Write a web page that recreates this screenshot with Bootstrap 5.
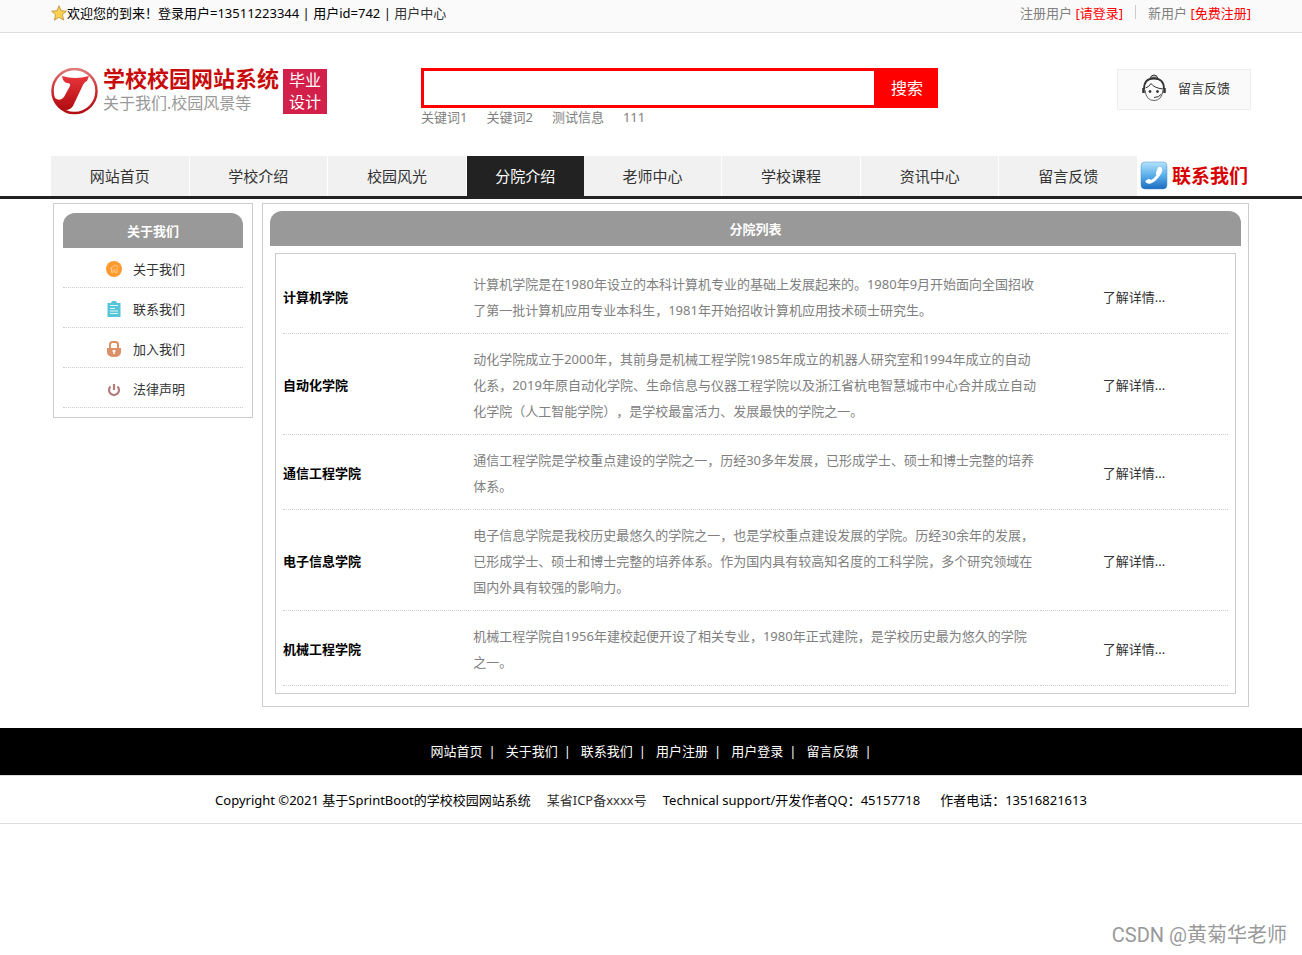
<!DOCTYPE html>
<html lang="zh-CN">
<head>
<meta charset="utf-8">
<meta name="viewport" content="width=device-width, initial-scale=1">
<title>学校校园网站系统</title>
<link href="https://cdn.jsdelivr.net/npm/bootstrap@5.3.0/dist/css/bootstrap.min.css" rel="stylesheet">
<style>
body{font:13px/26px "Noto Sans","Noto Sans CJK SC",sans-serif;color:#000;background:#fff;text-spacing-trim:space-all}
a{color:#333;text-decoration:none}
a:hover{color:#f00}
.wrap{width:100%;max-width:1200px;margin:0 auto}
.topbar{background:#fafafa;border-bottom:1px solid #ddd;height:33px;line-height:27px}
.topbar a.hot{color:#f00}
.topbar .star{margin-top:5px}
.account{gap:12px}
.muted{color:#808080}
.split{width:1px;height:14px;margin-top:5px;background:#ccc}
.masthead{height:123px;padding-top:35px}
.brand{width:370px}
.brand-text{margin-top:-4px}
.brand-name{font-size:22px;line-height:28px;font-weight:700;color:#c80b0b}
.brand-sub{font-size:16px;line-height:22px;color:#999}
.stamp{width:44px;height:45px;margin-top:1px;background:#d2204a;color:#fff;font-size:16px;line-height:22px}
.search{width:517px}
.search input{height:40px;border:3px solid #f00;border-right:0;outline:0}
.search button{width:64px;height:40px;padding-left:8px;border:0;background:#f00;color:#fff;font-size:16px}
.keys{gap:19px;line-height:18px}
.keys a{color:#808080}
.feedback{width:134px;height:41px;margin-top:1px;padding:0 0 4px 4px;gap:12px;background:#fafafa;border:1px solid #eee}
.mainnav{border-bottom:3px solid #222}
.mainnav .tabs a{flex:1 1 0;height:40px;line-height:40px;font-size:15px;text-align:center;background:#f1f1f1;border-right:1px solid #fff}
.mainnav .tabs a.current{flex:0 0 117px;background:#222;color:#fff;border:0}
.tel{width:113px;padding-left:2px;gap:4px;color:#d80000;font-size:19px;font-weight:700;white-space:nowrap}
.panes{padding:4px 2px 0;gap:9px}
.pane{border:1px solid #ccc}
.side{width:200px;padding:9px}
.pane-head{height:35px;line-height:36px;font-size:13px;font-weight:700;margin:0;text-align:center;color:#fff;background:#999;border-radius:12px 12px 0 0}
.side li{height:40px;border-bottom:1px dotted #ccc}
.side li a{height:39px;padding:2px 0 0 43px;gap:11px}
.content{padding:7px 7px 12px}
.colleges{border:1px solid #ccc;margin:7px 5px 0;padding:5px}
.colleges table{width:100%;border-collapse:separate;border-spacing:2px;table-layout:fixed}
.colleges th,.colleges td{padding:10px 0;border-bottom:1px dotted #ccc;vertical-align:middle}
.footlinks{margin-top:21px;background:#000;height:47px;line-height:47px;color:#fff;gap:10px}
.footlinks a{color:#fff}
.footlinks a::after{content:"|";margin-left:6px}
.legal{border:solid #ddd;border-width:1px 0;height:49px;line-height:49px;gap:16px}
.sign{font:20px/30px Roboto,"Noto Sans CJK SC",sans-serif;color:#999;padding:0 15px 5px}
</style>
</head>
<body class="d-flex flex-column min-vh-100">
<div class="topbar">
  <div class="wrap d-flex justify-content-between">
    <div class="d-flex">
      <svg class="star" width="16" height="16" viewBox="0 0 16 16" aria-hidden="true"><path d="M8 .8l2.1 5 5.3.4-4 3.5 1.2 5.400L8 12.300l-4.600 2.800 1.200-5.400-4-3.500 5.300-.4z" fill="#fbd24e" stroke="#c89a48"/></svg>
      <span>欢迎您的到来！登录用户=13511223344 | 用户id=742 | <a href="#">用户中心</a></span>
    </div>
    <div class="account d-flex muted">
      <span>注册用户 <a class="hot" href="#">[请登录]</a></span>
      <span class="split"></span>
      <span>新用户 <a class="hot" href="#">[免费注册]</a></span>
    </div>
  </div>
</div>
<header class="wrap masthead d-flex">
  <div class="brand d-flex">
    <svg class="flex-shrink-0" width="48" height="48" viewBox="0 0 48 48" aria-hidden="true">
      <defs><linearGradient id="red" x1="0" y1="0" x2="0" y2="1"><stop offset="0" stop-color="#e07a7a"/><stop offset=".5" stop-color="#c92a2e"/><stop offset="1" stop-color="#b30d12"/></linearGradient>
      <linearGradient id="stroke" x1="0" y1="0" x2="0" y2="1"><stop offset="0" stop-color="#e8343a"/><stop offset="1" stop-color="#b00c11"/></linearGradient></defs>
      <circle cx="23.500" cy="23" r="22" fill="#fff" stroke="url(#red)" stroke-width="2.500"/>
      <path d="M11 8Q24 12 38 8L36 13Q33 14 31 19L22 38Q17 45 9 40Q3 35 2 28Q8 35 13 29L19 18Q20 15 16 15Q12 14 11 8Z" fill="url(#stroke)"/>
    </svg>
    <div class="brand-text ms-1">
      <div class="brand-name">学校校园网站系统</div>
      <div class="brand-sub">关于我们.校园风景等</div>
    </div>
    <div class="stamp text-center ms-1">毕业<br>设计</div>
  </div>
  <form class="search">
    <div class="d-flex">
      <input class="flex-fill" type="text" aria-label="搜索">
      <button type="button">搜索</button>
    </div>
    <div class="keys d-flex"><a href="#">关键词1</a><a href="#">关键词2</a><a href="#">测试信息</a><a href="#">111</a></div>
  </form>
  <a class="feedback ms-auto d-flex align-items-center justify-content-center" href="#">
    <svg width="24" height="28" viewBox="0 0 24 28" fill="none" stroke="#333" aria-hidden="true">
      <path d="M8 4.500Q9 1 12 1t4 3.500Q12 3 8 4.500z" fill="#bbb"/>
      <path d="M2 15Q2 4.500 12 4.500T22 15" stroke-width="1.800"/>
      <path d="M3 16Q4 26.500 12 26.500T21 16" stroke="#666"/>
      <path d="M3.500 14Q7 13 9 9.500Q12 14 21 15M19.500 20Q17 23.500 12 23.500"/>
      <path d="M1.500 14v5M22.500 14v5" stroke-width="2.500"/>
      <circle cx="8" cy="17.500" r="1" fill="#333"/><circle cx="15.500" cy="17.500" r="1" fill="#333"/>
    </svg>
    留言反馈
  </a>
</header>
<nav class="mainnav">
  <div class="wrap d-flex">
    <div class="tabs d-flex flex-fill">
      <a href="#">网站首页</a><a href="#">学校介绍</a><a href="#">校园风光</a><a class="current" href="#">分院介绍</a><a href="#">老师中心</a><a href="#">学校课程</a><a href="#">资讯中心</a><a href="#">留言反馈</a>
    </div>
    <a class="tel d-flex align-items-center" href="#">
      <svg width="28" height="30" viewBox="0 0 28 30" aria-hidden="true">
        <defs><linearGradient id="blue" x1="0" y1="0" x2="0" y2="1"><stop offset="0" stop-color="#b5e3fa"/><stop offset=".5" stop-color="#5aaeea"/><stop offset="1" stop-color="#1c6cc0"/></linearGradient></defs>
        <rect x="1" y="1" width="26" height="27" rx="4" fill="url(#blue)" stroke="#4a93cf" stroke-width=".5"/>
        <path d="M18 6.500q2-1.500 3.500 0 2 3.500-1.500 8-4 6-9.500 8-3 1-5-1.500-.5-1 1-2l2-1q1-.5 2.500 1 3-1 5.500-5-1-1.500-.5-2.500z" fill="#fff"/>
      </svg>联系我们</a>
  </div>
</nav>
<main class="wrap panes d-flex align-items-start">
  <aside class="pane side flex-shrink-0">
    <h2 class="pane-head">关于我们</h2>
    <ul class="list-unstyled mb-0">
      <li><a class="d-flex align-items-center" href="#"><svg width="16" height="16" viewBox="0 0 16 16" aria-hidden="true"><circle cx="8" cy="8" r="8" fill="#ff9a2e"/><path d="M4 8l5-4 3 2M5.500 7.500v4H7V9h2v2.500h2V7" fill="none" stroke="#ffc88d"/></svg>关于我们</a></li>
      <li><a class="d-flex align-items-center" href="#"><svg width="16" height="16" viewBox="0 0 16 16" aria-hidden="true"><path d="M1.500 2H5l1-2h4l1 2h3.500v14h-13z" fill="#56c5d8"/><path d="M4 4.500h8M4 7.500h5M4 10h8M4 12.500h8" stroke="#d9f3f7"/></svg>联系我们</a></li>
      <li><a class="d-flex align-items-center" href="#"><svg width="16" height="16" viewBox="0 0 16 16" aria-hidden="true"><path d="M4 8V3.500Q4 1 6.500 1h3Q12 1 12 3.500V8" fill="none" stroke="#dd9068" stroke-width="2"/><path d="M1 7h14v4q0 5-7 5t-7-5z" fill="#dd9068"/><path d="M8 9v4M6.500 10h3" stroke="#fff" stroke-width="1.500"/></svg>加入我们</a></li>
      <li><a class="d-flex align-items-center" href="#"><svg width="16" height="16" viewBox="0 0 16 16" aria-hidden="true"><path d="M4.500 5.500a5 5 0 1 0 7 0M8 3v6" fill="none" stroke="#b57b7b" stroke-width="2.200"/></svg>法律声明</a></li>
    </ul>
  </aside>
  <section class="pane content flex-fill">
    <h2 class="pane-head">分院列表</h2>
    <div class="colleges">
      <table>
        <colgroup><col style="width:20%"><col style="width:60%"><col style="width:20%"></colgroup>
        <tbody>
        <tr><th scope="row">计算机学院</th><td class="muted">计算机学院是在1980年设立的本科计算机专业的基础上发展起来的。1980年9月开始面向全国招收了第一批计算机应用专业本科生，1981年开始招收计算机应用技术硕士研究生。</td><td class="text-center"><a href="#">了解详情...</a></td></tr>
        <tr><th scope="row">自动化学院</th><td class="muted">动化学院成立于2000年，其前身是机械工程学院1985年成立的机器人研究室和1994年成立的自动化系，2019年原自动化学院、生命信息与仪器工程学院以及浙江省杭电智慧城市中心合并成立自动化学院（人工智能学院），是学校最富活力、发展最快的学院之一。</td><td class="text-center"><a href="#">了解详情...</a></td></tr>
        <tr><th scope="row">通信工程学院</th><td class="muted">通信工程学院是学校重点建设的学院之一，历经30多年发展，已形成学士、硕士和博士完整的培养体系。</td><td class="text-center"><a href="#">了解详情...</a></td></tr>
        <tr><th scope="row">电子信息学院</th><td class="muted">电子信息学院是我校历史最悠久的学院之一，也是学校重点建设发展的学院。历经30余年的发展，已形成学士、硕士和博士完整的培养体系。作为国内具有较高知名度的工科学院，多个研究领域在国内外具有较强的影响力。</td><td class="text-center"><a href="#">了解详情...</a></td></tr>
        <tr><th scope="row">机械工程学院</th><td class="muted">机械工程学院自1956年建校起便开设了相关专业，1980年正式建院，是学校历史最为悠久的学院之一。</td><td class="text-center"><a href="#">了解详情...</a></td></tr>
        </tbody>
      </table>
    </div>
  </section>
</main>
<footer>
  <div class="footlinks d-flex justify-content-center"><a href="#">网站首页</a><a href="#">关于我们</a><a href="#">联系我们</a><a href="#">用户注册</a><a href="#">用户登录</a><a href="#">留言反馈</a></div>
  <div class="legal d-flex justify-content-center"><span>Copyright ©2021 基于SprintBoot的学校校园网站系统</span><a href="#">某省ICP备xxxx号</a><span>Technical support/开发作者QQ：45157718</span><span class="ms-1">作者电话：13516821613</span></div>
</footer>
<div class="sign mt-auto text-end">CSDN @黄菊华老师</div>
<script src="https://cdn.jsdelivr.net/npm/bootstrap@5.3.0/dist/js/bootstrap.bundle.min.js"></script>
</body>
</html>
